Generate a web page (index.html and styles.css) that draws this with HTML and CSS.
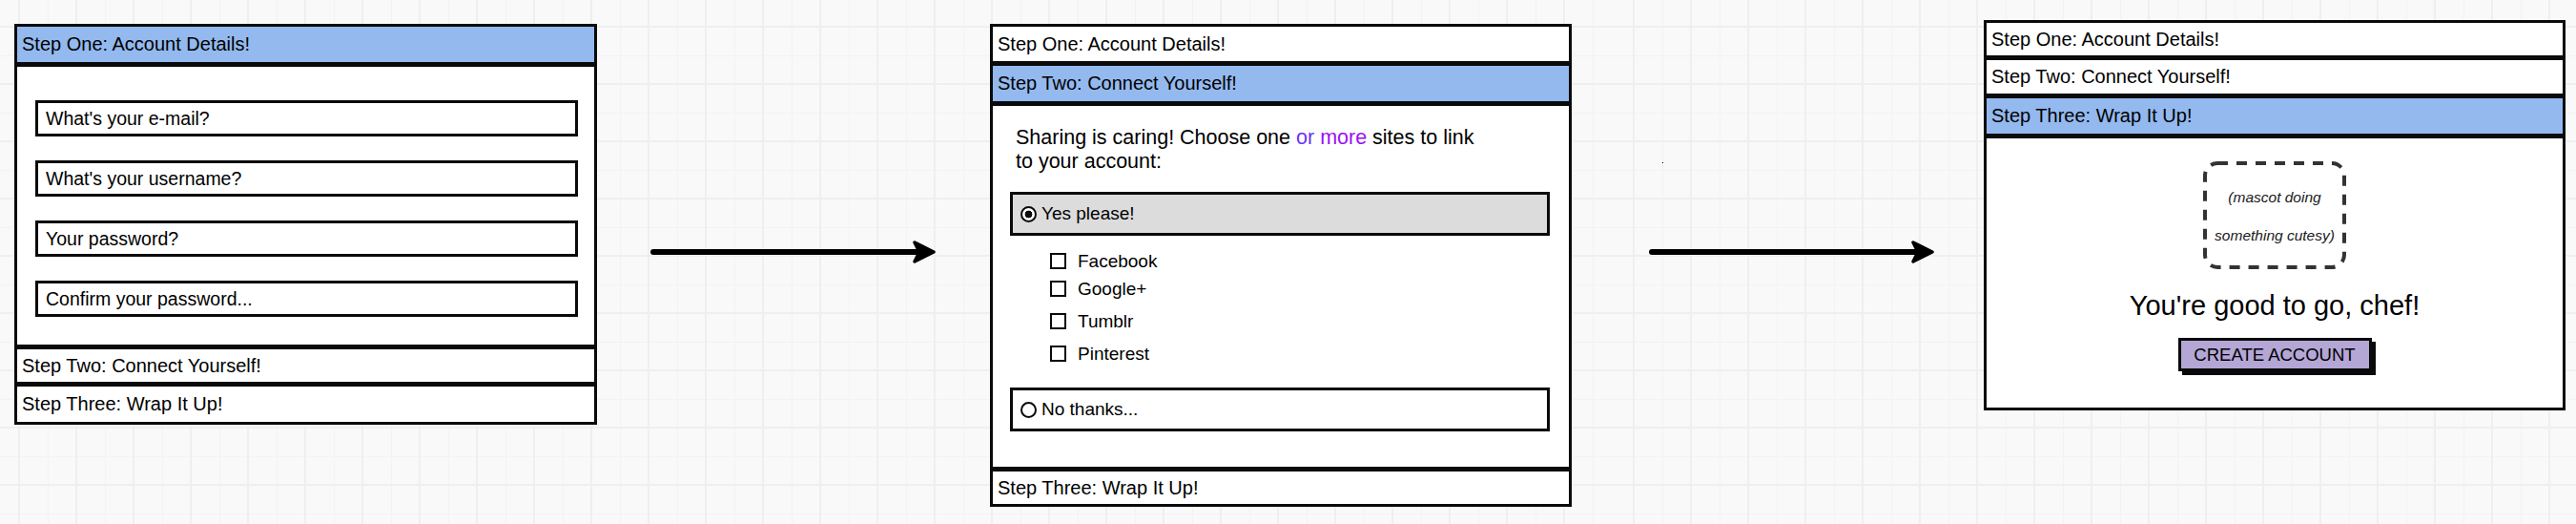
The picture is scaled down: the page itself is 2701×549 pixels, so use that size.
FILE: index.html
```html
<!DOCTYPE html>
<html lang="en">
<head>
<meta charset="utf-8">
<title>Sign-up wizard wireframe</title>
<link rel="stylesheet" href="styles.css">
</head>
<body>
  <div class="canvas canvas-left">
    <section class="acc acc-1">
      <div class="acc-head active h43">Step One: Account Details!</div>
      <div class="acc-body form-body">
        <div class="field">What's your e-mail?</div>
        <div class="field">What's your username?</div>
        <div class="field">Your password?</div>
        <div class="field">Confirm your password...</div>
      </div>
      <div class="acc-head h40">Step Two: Connect Yourself!</div>
      <div class="acc-head h43">Step Three: Wrap It Up!</div>
    </section>

    <div class="arrow arrow-1">
      <svg width="300" height="30" viewBox="0 0 300 30" aria-hidden="true">
        <line x1="3" y1="15" x2="284" y2="15" stroke="#000" stroke-width="6" stroke-linecap="round"/>
        <path d="M277 5 L297 15 L277 25 L282 15 Z" fill="#000" stroke="#000" stroke-width="3.5" stroke-linejoin="round"/>
      </svg>
    </div>

    <section class="acc acc-2">
      <div class="acc-head h42">Step One: Account Details!</div>
      <div class="acc-head active h43">Step Two: Connect Yourself!</div>
      <div class="acc-body social-body">
        <p class="intro">Sharing is caring! Choose one <span class="c-or">or</span> <span class="c-more">more</span> sites to link<br>to your account:</p>
        <div class="choice choice-yes"><span class="radio checked"></span>Yes please!</div>
        <ul class="sites">
          <li class="site s-1"><span class="check"></span>Facebook</li>
          <li class="site s-2"><span class="check"></span>Google+</li>
          <li class="site s-3"><span class="check"></span>Tumblr</li>
          <li class="site s-4"><span class="check"></span>Pinterest</li>
        </ul>
        <div class="choice choice-no"><span class="radio"></span>No thanks...</div>
      </div>
      <div class="acc-head h40">Step Three: Wrap It Up!</div>
    </section>
  </div>

  <div class="canvas canvas-right">
    <span class="stray-dot"></span>
    <div class="arrow arrow-2">
      <svg width="300" height="30" viewBox="0 0 300 30" aria-hidden="true">
        <line x1="3" y1="15" x2="284" y2="15" stroke="#000" stroke-width="6" stroke-linecap="round"/>
        <path d="M277 5 L297 15 L277 25 L282 15 Z" fill="#000" stroke="#000" stroke-width="3.5" stroke-linejoin="round"/>
      </svg>
    </div>

    <section class="acc acc-3">
      <div class="acc-head h40">Step One: Account Details!</div>
      <div class="acc-head h41">Step Two: Connect Yourself!</div>
      <div class="acc-head active h43">Step Three: Wrap It Up!</div>
      <div class="acc-body done-body">
        <div class="mascot">
          <svg class="mascot-frame" width="150" height="113" viewBox="0 0 150 113" aria-hidden="true">
            <rect x="2" y="2" width="146" height="109" rx="13" ry="13" fill="none" stroke="#333" stroke-width="4" stroke-dasharray="11 9"/>
          </svg>
          <span class="mascot-text">(mascot doing<br>something cutesy)</span>
        </div>
        <h2 class="done-title">You're good to go, chef!</h2>
        <button class="btn-create" type="button">CREATE ACCOUNT</button>
      </div>
    </section>
  </div>
</body>
</html>
```

FILE: styles.css
```css
html, body {
  margin: 0;
  padding: 0;
  width: 2701px;
  height: 549px;
  overflow: hidden;
}

body {
  display: flex;
  font-family: "Liberation Sans", Arial, sans-serif;
  color: #000;
  background: #f9f9f9;
}

/* canvas with grid */
.canvas {
  height: 549px;
  display: flex;
  align-items: flex-start;
  position: relative;
  box-sizing: border-box;
  background-color: #f9f9f9;
  background-image:
    linear-gradient(90deg, #efefef 2px, transparent 0),
    linear-gradient(180deg, #efefef 2px, transparent 0),
    linear-gradient(90deg, #f3f3f3 1px, transparent 0),
    linear-gradient(180deg, #f3f3f3 1px, transparent 0);
  background-size: 60px 60px, 60px 60px, 30px 30px, 30px 30px;
}

.canvas-left {
  width: 1690px;
  padding-left: 15px;
  background-position: 19px 27px, 19px 27px, 20px 28px, 20px 28px;
}

.canvas-right {
  flex: 1;
  background-position: 22px 27px, 22px 27px, 23px 28px, 23px 28px;
}

.stray-dot {
  position: absolute;
  left: 53px;
  top: 170px;
  width: 1px;
  height: 1px;
  background: #000;
}

/* arrows */
.arrow {
  width: 300px;
  height: 30px;
  margin-top: 249px;
}
.arrow svg { display: block; }
.arrow-1 { margin-left: 56px; }
.arrow-2 { margin-left: 39px; }

/* accordion panels */
.acc {
  display: flex;
  flex-direction: column;
}
.acc-1 { width: 611px; margin-top: 25px; }
.acc-2 { width: 610px; margin-top: 25px; margin-left: 56px; }
.acc-3 { width: 610px; margin-top: 21px; margin-left: 51px; }

.acc > * {
  border: 3px solid #0a0a0a;
  background: #fff;
  box-sizing: border-box;
}
.acc > * + * { margin-top: -1px; }

.acc-head {
  display: flex;
  align-items: center;
  padding-left: 5px;
  font-size: 20px;
  white-space: nowrap;
}
.acc-head.active { background: #93b9ef; }
.h40 { height: 40px; }
.h41 { height: 41px; }
.h42 { height: 42px; }
.h43 { height: 43px; }

/* step one body */
.form-body {
  display: flex;
  flex-direction: column;
  gap: 25px;
  padding: 35px 17px 29px 19px;
}
.field {
  height: 38px;
  border: 3px solid #0a0a0a;
  box-sizing: border-box;
  display: flex;
  align-items: center;
  padding-left: 8px;
  font-size: 19.5px;
  background: #fff;
}

/* step two body */
.social-body {
  padding: 21px 20px 37px 18px;
  display: flex;
  flex-direction: column;
}
.intro {
  margin: 0 0 0 6px;
  font-size: 21.5px;
  line-height: 24.5px;
}
.c-or { color: #6a35f2; }
.c-more { color: #9a10f5; }

.choice {
  height: 46px;
  border: 3px solid #0a0a0a;
  box-sizing: border-box;
  display: flex;
  align-items: center;
  padding-left: 8px;
  font-size: 19px;
}
.choice-yes {
  margin-top: 20px;
  background: #dcdcdc;
}
.choice-no {
  margin-top: 21px;
  background: #fff;
}
.radio {
  width: 17px;
  height: 17px;
  border: 2px solid #0a0a0a;
  border-radius: 50%;
  box-sizing: border-box;
  background: #fff;
  margin-right: 5px;
  flex: none;
}
.radio.checked {
  background: radial-gradient(circle, #0a0a0a 0 3.6px, #fff 4.2px);
}

.sites {
  list-style: none;
  margin: 12px 0 0 42px;
  padding: 0;
}
.site {
  height: 29px;
  display: flex;
  align-items: center;
  font-size: 19px;
}
.s-3, .s-4 { margin-top: 5px; }
.check {
  width: 17px;
  height: 17px;
  border: 2px solid #0a0a0a;
  box-sizing: border-box;
  background: #fff;
  margin-right: 12px;
  flex: none;
}

/* step three body */
.done-body {
  display: flex;
  flex-direction: column;
  align-items: center;
  padding: 24px 0 38px;
}
.mascot {
  position: relative;
  width: 150px;
  height: 113px;
  display: flex;
  align-items: center;
  justify-content: center;
}
.mascot-frame {
  position: absolute;
  left: 0;
  top: 0;
}
.mascot-text {
  font-style: italic;
  font-size: 15.5px;
  line-height: 40px;
  text-align: center;
  color: #1a1a1a;
  padding-top: 3px;
}
.done-title {
  margin: 22px 0 0;
  font-size: 29px;
  font-weight: normal;
  line-height: 33px;
}
.btn-create {
  margin-top: 17px;
  width: 203px;
  height: 35px;
  border: 3px solid #0a0a0a;
  background: #b4a7d6;
  box-shadow: 4px 4px 0 #0a0a0a;
  font-family: inherit;
  font-size: 18.5px;
  color: #000;
  padding: 0;
  border-radius: 0;
}
```
